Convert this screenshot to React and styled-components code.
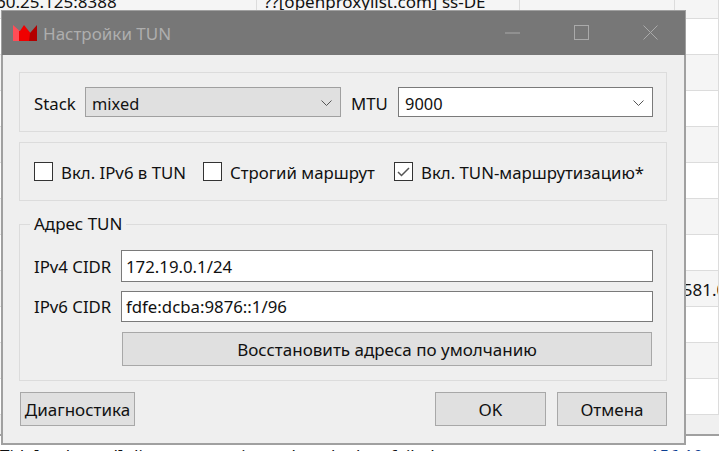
import styled, { createGlobalStyle } from "styled-components";

const GlobalStyle = createGlobalStyle`
  html, body {
    margin: 0;
    padding: 0;
    background: #fff;
  }
  * {
    box-sizing: border-box;
  }
`;

const font = `"Noto Sans", "Open Sans", "Liberation Sans", sans-serif`;

const Desktop = styled.div`
  position: relative;
  width: 719px;
  height: 451px;
  overflow: hidden;
  background: #fff;
  font-family: ${font};
  font-size: 16.8px;
  color: #111;
`;

/* table behind the dialog */
const Table = styled.div`
  display: flex;
  flex-direction: column;
  margin-top: -17px;
`;

const TableRow = styled.div`
  display: grid;
  grid-template-columns: 257px 263px 155px 1fr;
  height: 36px;
  background: ${(p) => (p.$odd ? "#f5f5f5" : "#fff")};
  border-bottom: 1px solid #dcdcdc;
`;

const Cell = styled.div`
  text-indent: ${(p) => p.$indent}px;
  line-height: 38px;
  font-size: 17px;
  white-space: nowrap;
  overflow: hidden;
  border-right: 1px solid #dcdcdc;
`;

const ScrollArea = styled.div`
  height: 45px;
  margin-top: -24px;
  background: #f0f0f0;
  border-top: 1px solid #a0a0a0;
  border-bottom: 2px solid #a0a0a0;
`;

const LogLine = styled.div`
  display: flex;
  justify-content: space-between;
  padding: 8px 16px 0 0;
  font-size: 17px;
  line-height: 24px;
  white-space: nowrap;
`;

const LogLink = styled.span`
  color: #0b3d91;
`;

/* the dialog */
const Window = styled.div`
  position: absolute;
  left: 1px;
  top: 10px;
  width: 685px;
  height: 435px;
  display: flex;
  flex-direction: column;
  background: #efefef;
  border: 1px solid #a0a0a0;
  border-width: 1px 2px 2px 2px;
`;

const TitleBar = styled.div`
  display: flex;
  align-items: center;
  height: 44px;
  flex: none;
  margin: 0 -1px 0 -1px;
  padding-left: 11px;
  background: #777;
`;

const TitleText = styled.span`
  margin-left: 6px;
  font-size: 17px;
  color: #aeaeae;
`;

const Controls = styled.div`
  display: flex;
  align-items: center;
  margin: 0 0 1px auto;
  padding-right: 27px;
  gap: 54px;
`;

const Body = styled.div`
  flex: 1;
  display: flex;
  flex-direction: column;
  padding: 17px 17px 18px 16px;
`;

const Group = styled.div`
  display: grid;
  align-items: center;
  height: ${(p) => p.$h}px;
  margin-bottom: 10px;
  padding: 0 13px 0 14px;
  grid-template-columns: ${(p) => p.$cols};
  column-gap: ${(p) => p.$gap || 0}px;
  border: 1px solid #dcdcdc;
`;

const Field = styled.fieldset`
  margin: 2px 0 0;
  height: 168px;
  padding: 15px 13px 0 14px;
  display: grid;
  grid-template-columns: 87px 1fr;
  grid-auto-rows: min-content;
  row-gap: 9px;
  align-items: center;
  border: 1px solid #dcdcdc;
`;

const Legend = styled.legend`
  margin-left: -4px;
  padding: 0 4px;
  font-size: 17px;
  line-height: 22px;
`;

const Label = styled.span`
  white-space: nowrap;
  padding-top: ${(p) => p.$drop || 0}px;
`;

const Combo = styled.div`
  display: flex;
  align-items: center;
  justify-content: space-between;
  height: 30px;
  padding: 2px 8px 0 6px;
  font-size: 16.4px;
  background: ${(p) => (p.$flat ? "#e0e0e0" : "#fff")};
  border: 1px solid ${(p) => (p.$flat ? "#a0a0a0" : "#7a7a7a")};
`;

const Input = styled.input`
  width: 100%;
  height: ${(p) => p.$h}px;
  padding: 0 4px;
  font: inherit;
  color: #111;
  background: #fff;
  border: 1px solid #7a7a7a;
  border-radius: 0;
  outline: none;
`;

const Check = styled.label`
  display: flex;
  align-items: center;
  gap: 8px;
  white-space: nowrap;
`;

const Box = styled.span`
  display: flex;
  align-items: center;
  justify-content: center;
  width: 19px;
  height: 19px;
  flex: none;
  background: #fff;
  border: 1px solid #333;
`;

const Button = styled.button`
  height: 34px;
  width: ${(p) => (p.$w ? `${p.$w}px` : "auto")};
  padding: 0;
  font: inherit;
  font-size: 17px;
  color: #111;
  background: #e0e0e0;
  border: 1px solid #a8a8a8;
  border-radius: 0;
`;

const WideButton = styled(Button)`
  grid-column: 2;
  margin: 1px 1px 0;
`;

const Footer = styled.div`
  display: flex;
  gap: 11px;
  margin: 11px 0 0 1px;
`;

const FooterEnd = styled.div`
  display: flex;
  gap: 11px;
  margin-left: auto;
`;

const Chevron = () => (
  <svg width="11" height="6" viewBox="0 0 11 6" fill="none" stroke="#555" strokeWidth="1">
    <path d="M0.5 0.5 L5.5 5.5 L10.5 0.5" />
  </svg>
);

const Tick = () => (
  <svg width="13" height="10" viewBox="0 0 13 10" fill="none" stroke="#555" strokeWidth="1.5">
    <path d="M1 5 L4.5 8.5 L12 1" />
  </svg>
);

const Logo = () => (
  <svg width="24" height="16" viewBox="0 0 24 16">
    <polygon points="0,0 9,8 9,16 0,16" fill="#ff4d57" />
    <polygon points="11,0 19,10 17,16 6,16 6,6 7,6" fill="#f00000" />
    <polygon points="24,0 24,16 16,16 17,8" fill="#b30000" />
  </svg>
);

const Minimize = () => (
  <svg width="15" height="2" viewBox="0 0 15 2">
    <path d="M0 1 H15" stroke="#aaa" strokeWidth="1" />
  </svg>
);

const Maximize = () => (
  <svg width="15" height="15" viewBox="0 0 15 15" fill="none">
    <rect x="0.5" y="0.5" width="14" height="14" stroke="#aaa" />
  </svg>
);

const Close = () => (
  <svg width="15" height="15" viewBox="0 0 15 15" fill="none">
    <path d="M0.5 0.5 L14.5 14.5 M14.5 0.5 L0.5 14.5" stroke="#aaa" />
  </svg>
);

const rows = [
  ["60.25.125:8388", "??[openproxylist.com] ss-DE", ""],
  ["", "", ""],
  ["", "", ""],
  ["", "", ""],
  ["", "", ""],
  ["", "", ""],
  ["", "", ""],
  ["", "", ""],
  ["", "", "1581.0"],
  ["", "", ""],
  ["", "", ""],
  ["", "", ""],
];

export default function App() {
  return (
    <Desktop>
      <GlobalStyle />
      <Table>
        {rows.map((row, i) => (
          <TableRow key={i} $odd={i % 2 === 0}>
            <Cell $indent={-4}>{row[0]}</Cell>
            <Cell $indent={7}>{row[1]}</Cell>
            <Cell />
            <Cell $indent={-2}>{row[2]}</Cell>
          </TableRow>
        ))}
      </Table>
      <ScrollArea />
      <LogLine>
        <span>Tid: [outbound] direct connection to host lookup failed</span>
        <LogLink>156.10</LogLink>
      </LogLine>

      <Window>
        <TitleBar>
          <Logo />
          <TitleText>Настройки TUN</TitleText>
          <Controls>
            <Minimize />
            <Maximize />
            <Close />
          </Controls>
        </TitleBar>
        <Body>
          <Group $h={60} $cols="41px 256px 37px 1fr" $gap={10}>
            <Label $drop={2}>Stack</Label>
            <Combo $flat>
              mixed
              <Chevron />
            </Combo>
            <Label $drop={2}>MTU</Label>
            <Combo>
              9000
              <Chevron />
            </Combo>
          </Group>
          <Group $h={59} $cols="169px 191px 1fr">
            <Check>
              <Box />
              <Label $drop={2}>Вкл. IPv6 в TUN</Label>
            </Check>
            <Check>
              <Box />
              <Label $drop={2}>Строгий маршрут</Label>
            </Check>
            <Check>
              <Box>
                <Tick />
              </Box>
              <Label $drop={2}>Вкл. TUN-маршрутизацию*</Label>
            </Check>
          </Group>
          <Field>
            <Legend>Адрес TUN</Legend>
            <Label>IPv4 CIDR</Label>
            <Input $h={32} readOnly value="172.19.0.1/24" />
            <Label>IPv6 CIDR</Label>
            <Input $h={31} readOnly value="fdfe:dcba:9876::1/96" />
            <WideButton>Восстановить адреса по умолчанию</WideButton>
          </Field>
          <Footer>
            <Button $w={115}>Диагностика</Button>
            <FooterEnd>
              <Button $w={111}>OK</Button>
              <Button $w={110}>Отмена</Button>
            </FooterEnd>
          </Footer>
        </Body>
      </Window>
    </Desktop>
  );
}
